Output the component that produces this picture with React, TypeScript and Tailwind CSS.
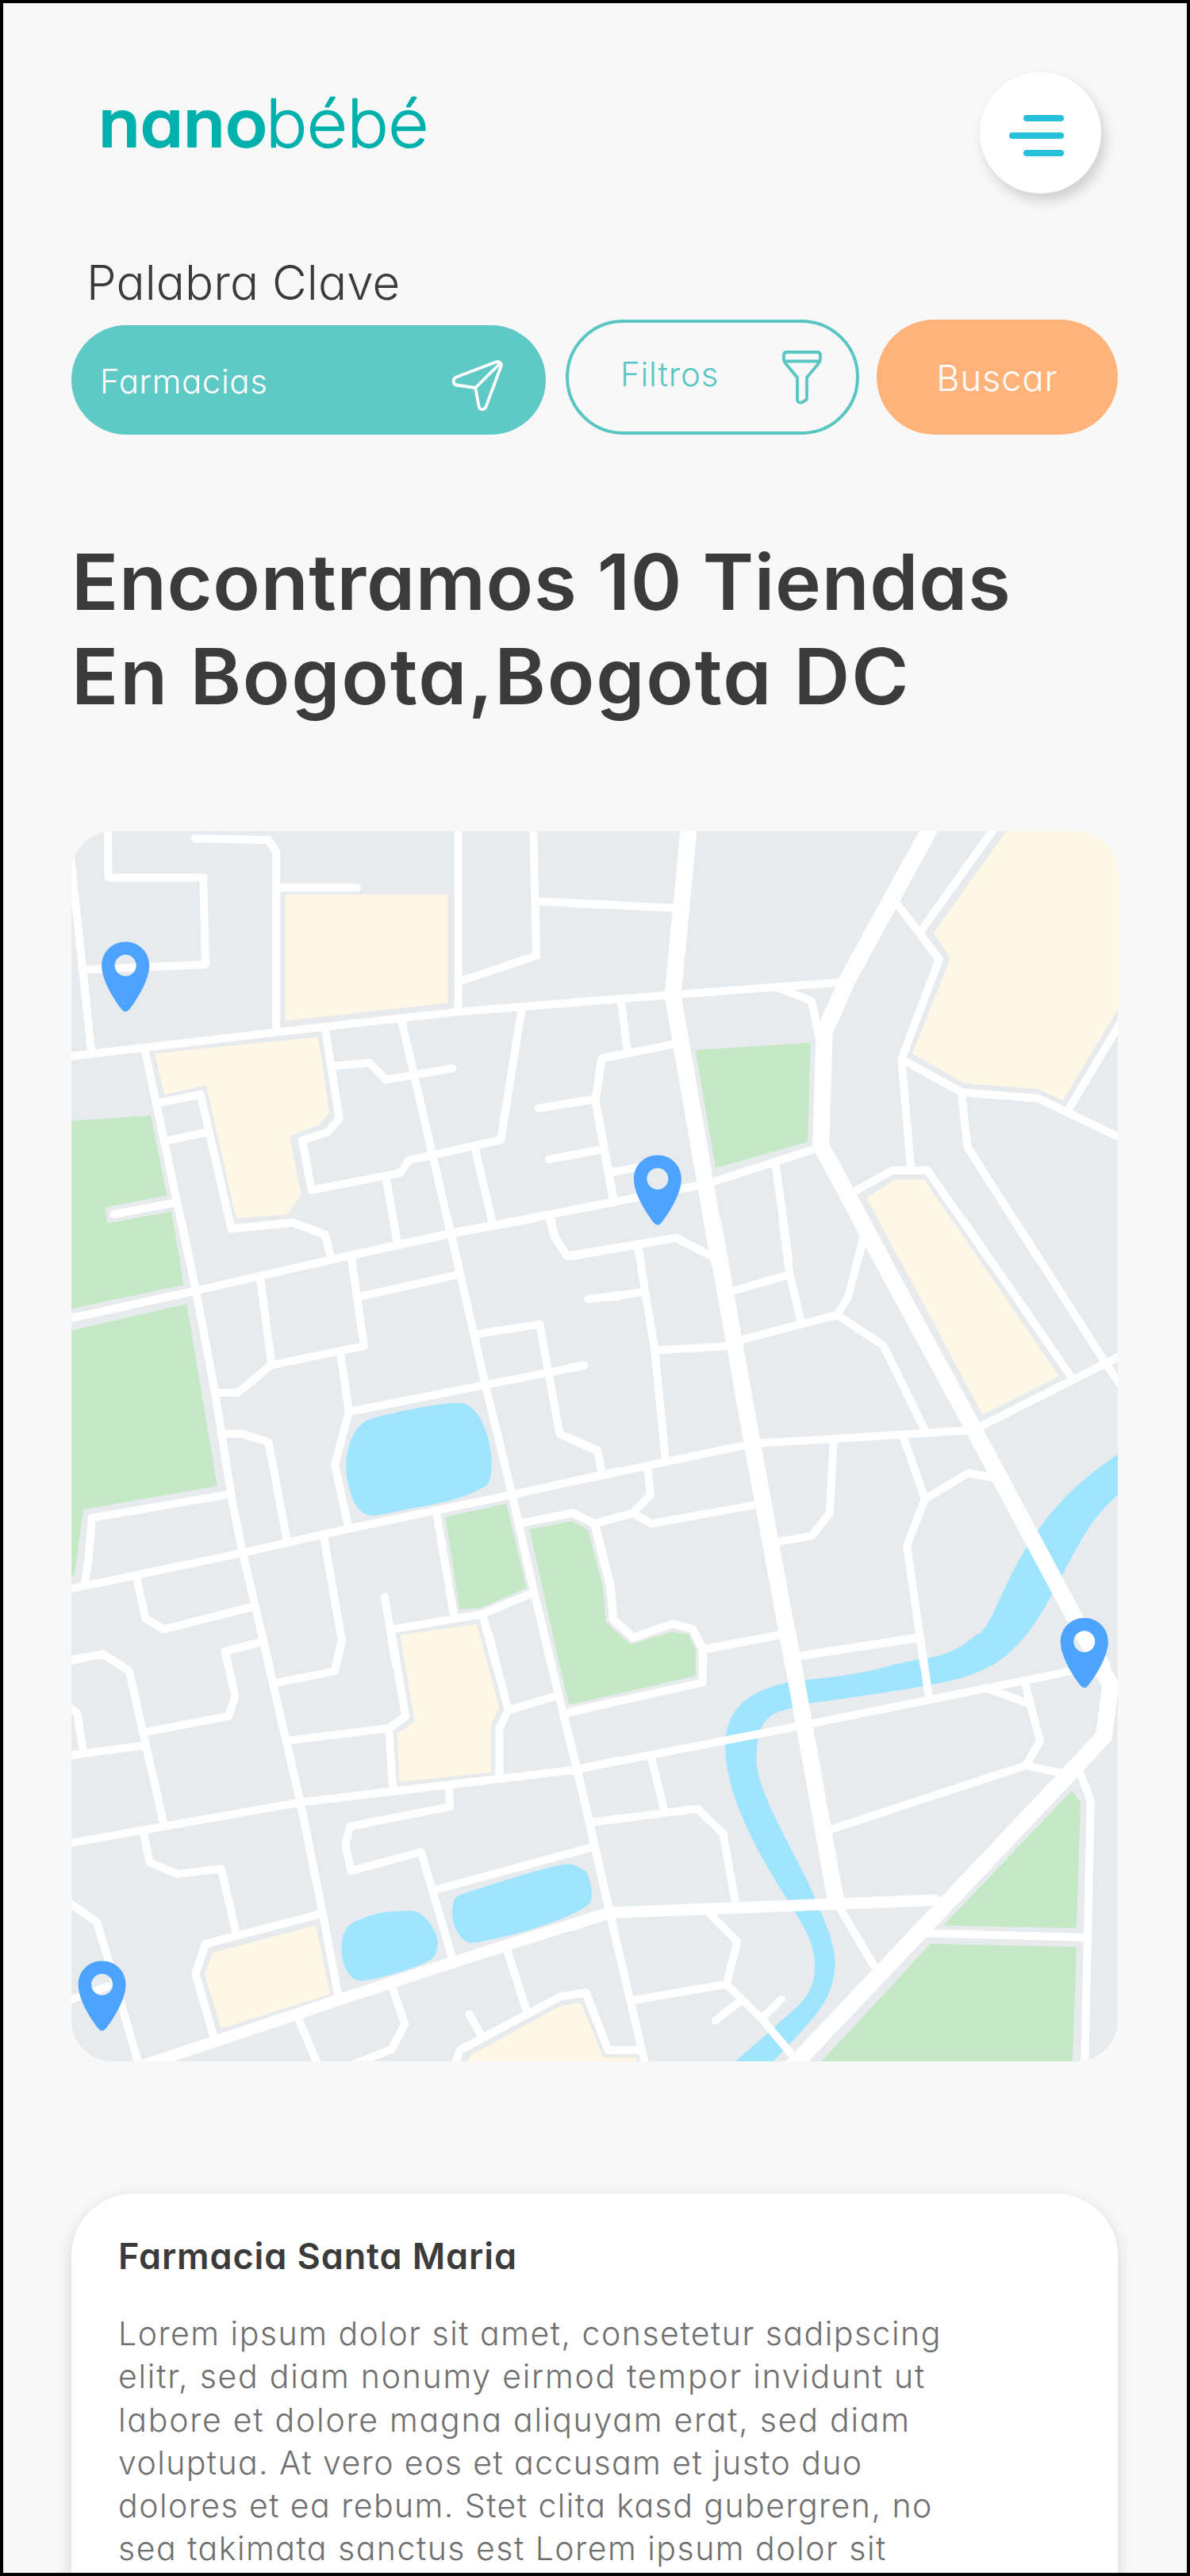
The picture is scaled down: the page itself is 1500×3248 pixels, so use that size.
type Tile = {
  x: number;
  y: number;
  park: string;
  block: string;
  water: string;
  avenues: string;
  boulevards: string;
  streets: string;
};

// Each map tile covers 700x560 map units and is plotted on its own 1568x1568 grid.
const tiles: Tile[] = [
  {
    x: 80,
    y: 1030,
    park: "M0 1075L248 1055L293 1337L118 1378L124 1435L306 1393L330 1568H0Z",
    block:
      "M627 275H1086V657L627 720Z M259 835L720 777L752 1045L722 1087L640 1128L672 1332L634 1404L489 1417L404 947L286 981Z",
    water: "",
    avenues: "",
    boulevards: "",
    streets:
      "M126 0L128 214H396L402 521L60 540 M22 150L80 830 M372 76L580 82L602 125V755 M602 250H830 M1116 0V680 M1327 0L1336 490L1120 580 M1336 298L1568 311 M0 848L603 760L1116 688L1568 643 M232 828L357 1568 M262 1012L388 980L475 1453L648 1432L740 1475L757 1560 M285 1145L412 1112 M315 1362L143 1403 M741 755L780 1065L747 1113L675 1142L702 1318L953 1256L975 1213L1236 1140L1294 685 M762 880L865 868L912 928L1100 887 M955 715L1095 1475L1113 1568 M912 1275L944 1505 M1162 1165L1213 1435 M700 1580L944 1510L1100 1468L1370 1405L1568 1357 M1375 1410L1390 1485L1424 1551L1568 1520 M1568 838L1520 853L1503 1000L1552 1345 M1342 1029L1503 996 M1372 1209L1525 1173 M1547 1255L1568 1250",
  },
  {
    x: 720,
    y: 1030,
    park: "M352 823L677 797L669 1147L409 1240Z",
    block:
      "M1258 0L1024 410L1072 500L964 835L1112 940L1320 961L1390 1001L1568 630V0Z M835 1345L915 1280H998L1155 1568H930Z",
    water: "",
    avenues: "M336 0L288 630L418 1568 M1032 0L781 575L716 760L706 1160L882 1568",
    boulevards: "",
    streets:
      "M0 656L290 628L770 583 M0 305L290 321 M142 650L160 830 M300 800L88 853L70 1000L120 1345 M0 1010L70 996 M0 1195L92 1173 M112 1255L200 1235 M0 1388L380 1297L700 1168 M580 600L680 650L703 790 M920 305L1040 503L934 855L1103 972L1320 994L1568 1143 M1219 0L990 400 M934 860L960 1240 M1103 975L1120 1165L1325 1568 M1404 1035L1568 694 M800 1323L908 1248H1007L1185 1568 M578 1225L616 1568 M826 1490L810 1568 M0 1552L297 1486L405 1555 M190 1515L197 1568",
  },
  {
    x: 80,
    y: 1540,
    park: "M0 0H118L124 7L155 0H311L340 225L0 314Z M0 392L349 291L435 934L57 1017L32 1250L0 1255Z M1080 1044L1252 996L1308 1294L1180 1364L1119 1369Z M1317 1087L1438 1058L1482 1090L1524 1290L1532 1415L1568 1457V1568H1402Z",
    block: "M953 1460L1168 1422L1199 1568H966Z",
    water:
      "M870 697C930 675 1060 640 1120 641C1175 642 1212 770 1210 860C1208 920 1200 930 1185 940C1120 985 1060 995 1000 1010C950 1020 890 1040 872 1039C820 1036 800 930 799 865C800 790 825 710 870 697Z",
    avenues: "",
    boulevards: "",
    streets:
      "M335 0L375 245L430 610L475 970L507 1170L582 1568 M0 348L375 245L757 135L1100 42L1330 -10 M470 0L475 25L648 5L740 47L757 130 M933 0L944 78 M1088 0L1122 190L1192 575L1268 965L1330 1310L1380 1568 M557 205L589 505L493 605H437 M589 507L850 440L815 135 M840 265L1118 187 M783 465L807 672L767 860L806 1080 M807 672L1192 577L1470 509 M1168 398L1346 363L1402 750L1510 808L1520 885 M450 750H506L580 779L633 1130 M475 962L81 1047Q74 1200 60 1280 M0 1303L507 1170L806 1085L1268 965L1568 882 M208 1262L233 1403L285 1440L537 1360 M0 1552L113 1528L165 1568 M560 1485L457 1518L465 1568 M737 1120L787 1480L770 1568 M908 1326L940 1568 M930 1440L1182 1387L1325 1313 M1055 1035L1104 1395 M1185 1390L1222 1568 M1295 1065L1440 1029L1500 1068L1568 1043 M1500 1068L1545 1290L1553 1405L1568 1425 M1375 0L1388 55L1424 123L1568 92 M1482 274L1568 265",
  },
  {
    x: 720,
    y: 1540,
    park: "M0 1058L48 1090L88 1280L97 1413L168 1495L287 1448L332 1463L352 1515V1568H0Z",
    block: "M872 0H1080L1378 547L1162 682Z",
    water:
      "M1568 803C1460 890 1380 980 1318 1092L1287 1150C1230 1270 1210 1340 1190 1390C1150 1495 1080 1530 1010 1543L900 1568H1190C1290 1490 1340 1360 1388 1248C1450 1100 1480 1030 1568 940Z",
    avenues: "M401 0L511 775L628 1568 M820 0L1137 732L1440 1440L1500 1568",
    boulevards: "",
    streets:
      "M0 120L297 58L400 125 M190 90L210 250L237 455L267 835 M50 274L205 250 M240 455L445 440 M598 0L618 185L650 355 M455 247L618 187 M480 418L752 330L882 437L1000 738 M752 330L783 268L825 60 M0 920L510 785L1125 738 M1150 728L1568 465 M1110 0L1412 548 M1255 0L1507 495L1568 605 M0 770L75 810L88 885 M0 515L38 508 M217 870L225 965L175 1030L68 1067L5 1029 M175 1030L227 1067L525 1000 M742 775L731 1030L681 1110L588 1130 M940 765L1000 980L1122 889L1195 905 M1000 980L949 1145L997 1568 M68 1067L112 1285L121 1405L176 1470L287 1420L345 1440L374 1510V1568 M374 1512L595 1458 M645 1535L985 1470",
  },
  {
    x: 80,
    y: 2060,
    park: "M1382 0H1568V211L1428 249Z",
    block:
      "M952 5L980 0H1175L1231 257L1208 325V489L950 523L943 352L993 311Z M424 1125L714 1030L754 1272L446 1394L400 1202Z M1462 1304L1405 1313L1148 1490L1130 1568H1568V1495H1523Z",
    water:
      "M845 1005C890 982 940 977 985 978C1020 980 1058 1050 1058 1090C1055 1145 1040 1150 1020 1163C960 1195 870 1225 840 1225C800 1222 786 1150 786 1110C788 1050 800 1025 845 1005Z M1125 920C1200 890 1370 820 1422 813C1440 813 1478 830 1483 855C1495 895 1495 940 1487 950C1470 985 1330 1045 1270 1062C1230 1072 1170 1093 1150 1091C1120 1085 1098 1030 1099 985C1100 940 1105 928 1125 920Z",
    avenues: "",
    boulevards: "M120 1568L427 1440L780 1292L1100 1160L1540 985",
    streets:
      "M0 100L113 72L187 132L283 665 M0 245L40 280L57 415 M0 432L232 394 M232 347L467 291L486 222L458 62L555 30 M560 0L670 595L735 1000L778 1285 M785 0L787 25L767 132L600 173 M0 743L670 595L1445 480L1568 447 M228 705L244 807L322 848L447 830L488 1055 M0 935L30 960L95 1018L130 1160L225 1568 M0 1302L125 1245 M724 990L402 1095L374 1200L427 1430 M928 0L967 292L920 333L931 545 M636 377L920 333 M1202 0L1257 270L1232 333V500 M1257 270L1395 218 M1358 0L1400 220L1452 480L1500 740L1545 990L1568 1120 M1425 280L1568 237 M1089 540L1093 610L810 680L797 745L813 837L1011 770L1100 1150 M1048 905L1495 753 M1492 665L1568 653 M930 1250L965 1378L928 1467L820 1520 M663 1355L715 1509L735 1568 M1253 1115L1310 1335 M1147 1343L1182 1420 M1105 1530L1120 1470L1405 1280L1475 1267L1540 1470H1568",
  },
  {
    x: 720,
    y: 2060,
    park: "M0 0H135L168 38L275 0H332L352 55V149L0 249Z M1414 554L1439 595L1428 1039L1052 1030Z M1015 1095L1428 1105L1415 1568H665Z",
    block: "M0 1305H28L92 1495H185L190 1568H0Z",
    water:
      "M1148 0C1105 50 1060 75 1005 87C870 112 870 140 662 163C540 180 455 230 438 357C420 540 530 780 612 940C660 1040 690 1090 689 1180C687 1290 630 1320 570 1395L465 1509L410 1568H530L572 1509L612 1455C680 1365 745 1290 746 1165C745 1090 725 1040 690 935C640 780 510 540 525 420C530 290 570 280 625 262L672 246C850 215 905 205 995 185C1160 150 1210 110 1288 0Z",
    avenues: "M613 0L748 940 M1450 0L1497 120L1524 180L1505 362L1410 490L595 1568",
    boulevards: "M0 1030L110 985L1030 940",
    streets:
      "M350 0L372 55V172L0 275 M372 55L613 0 M645 78L985 12 M985 0L1010 215 M0 485L20 478L660 322L1420 130 M-20 290L18 480L110 985L208 1509L218 1568 M228 440L264 625 M60 665L358 618L430 705L465 950 M0 775L60 753 M1170 190L1290 245 M1283 175L1300 260L1325 378L1285 465L1385 492 M735 690L1285 465 M1438 490L1468 590L1450 1568 M1010 1057L1450 1072 M758 965L855 1170 M390 985L470 1087L440 1237L180 1293 M440 1237L540 1360L620 1480 M408 1366L477 1298 M542 1355L595 1290 M0 1275L43 1267L105 1469H195",
  },
];

const pins = [
  { x: 158.7, y: 1187.5 },
  { x: 829.4, y: 1456.5 },
  { x: 1367.3, y: 2040 },
  { x: 129.1, y: 2472.5 },
];

function CityMap() {
  const place = (t: Tile) => `translate(${t.x} ${t.y}) scale(0.446429 0.357143)`;
  return (
    <svg viewBox="90.5 1048 1319 1551" className="block h-[1551px] w-[1319px]">
      {tiles.map((t, i) => (
        <g key={i} transform={place(t)}>
          <path d={t.block} fill="#fef7e6" />
          <path d={t.park} fill="#c5e8c5" />
          <path d={t.water} fill="#9fe5ff" />
        </g>
      ))}
      {tiles.map((t, i) => (
        <g
          key={i}
          transform={place(t)}
          fill="none"
          stroke="#fff"
          strokeLinecap="round"
          strokeLinejoin="round"
        >
          <path d={t.streets} strokeWidth="10" vectorEffect="non-scaling-stroke" />
          <path d={t.boulevards} strokeWidth="14.5" vectorEffect="non-scaling-stroke" />
          <path d={t.avenues} strokeWidth="21" vectorEffect="non-scaling-stroke" />
        </g>
      ))}
      {pins.map((p, i) => (
        <path
          key={i}
          transform={`translate(${p.x - 30} ${p.y})`}
          fill="#4da4ff"
          fillRule="evenodd"
          d="M30 0C13 0 0 13 0 30C0 51 20 79 25.500 85.500Q30 90.500 34.500 85.500C40 79 60 51 60 30C60 13 47 0 30 0ZM30 16.200A13.500 13.500 0 1 1 30 43.200A13.500 13.500 0 1 1 30 16.200Z"
        />
      ))}
    </svg>
  );
}

function Logo() {
  return (
    <svg
      viewBox="0 0 430 90"
      className="h-[90px] w-[430px] overflow-visible"
      fill="#00b0ac"
      stroke="#00b0ac"
      strokeLinejoin="round"
    >
      <text x="-1" y="67" textLength="213" lengthAdjust="spacingAndGlyphs" fontSize="82" fontWeight="500" strokeWidth="2">
        nano
      </text>
      <text x="210" y="67" textLength="205" lengthAdjust="spacingAndGlyphs" fontSize="82" fontWeight="200" strokeWidth="2.400">
        bébé
      </text>
    </svg>
  );
}

function SendIcon() {
  return (
    <svg viewBox="569 451 68 68" className="size-[68px]" fill="none" stroke="#fff" strokeWidth="3.8" strokeLinejoin="round">
      <path d="M626 455.500L576 474.500C571.500 476.500 571.500 483.500 576.500 484.500L600.300 488L604.500 511C605.500 516.500 611.500 516.500 613.500 512L632.500 461C634 457 630 453.800 626 455.500ZM600.300 488L631 457.500" />
    </svg>
  );
}

function FunnelIcon() {
  return (
    <svg viewBox="986 440 52 70" className="h-[70px] w-[52px]" fill="none" stroke="#5ac6c3" strokeWidth="3.8" strokeLinejoin="round">
      <path d="M989 452V447Q989 443 993 443H1031Q1035 443 1035 447V452Q1035 455 1033 457L1018 475V501Q1018 503 1016 504L1011.500 506.500Q1006 507 1006 503V475L991 457Q989 455 989 452ZM989 454.500H1035" />
    </svg>
  );
}

export default function App() {
  return (
    <div className="h-[3248px] w-[1500px] overflow-hidden border-4 border-black bg-[#f8f8f8] px-[86px] font-['Inter',sans-serif] text-[#3b3b3b] [font-feature-settings:'cv11']">
      <header className="flex justify-between pt-[87px] pr-[22px] pl-[35px]">
        <div className="pt-[27px]">
          <Logo />
        </div>
        <button className="flex size-[153px] flex-col items-end justify-center gap-[14px] rounded-full bg-white pt-[7px] pr-[47px] shadow-[5px_9px_16px_rgba(0,0,0,0.17)]">
          <span className="h-2 w-[51px] rounded-full bg-[#26c0da]" />
          <span className="h-2 w-[69px] rounded-full bg-[#26c0da]" />
          <span className="h-2 w-[51px] rounded-full bg-[#26c0da]" />
        </button>
      </header>

      <label className="mt-[82px] block pl-[19px] text-[60px] leading-[60px] font-light tracking-[0.1px]">
        Palabra Clave
      </label>
      <div className="mt-[17px] flex items-end">
        <div className="flex h-[138px] w-[598px] items-center justify-between rounded-full bg-[#5fc9c5] pr-[52px] pl-[36px] text-[42px] font-light tracking-[0.6px] text-white">
          <span className="pt-[3px]">Farmacias</span>
          <span className="pt-[13px]">
            <SendIcon />
          </span>
        </div>
        <button className="ml-[25px] flex h-[145px] w-[370px] items-center justify-between rounded-full border-4 border-[#5ac6c3] pr-[42px] pl-[65px] text-[42px] font-light tracking-[0.8px] text-[#5ac6c3]">
          <span className="pb-2">Filtros</span>
          <FunnelIcon />
        </button>
        <button className="ml-[22px] h-[145px] w-[304px] rounded-full bg-[#ffb37a] pt-[3px] text-[45px] font-light tracking-[1px] text-white">
          Buscar
        </button>
      </div>

      <h1 className="mt-[126px] text-[98px] leading-[119.3px] font-semibold whitespace-nowrap">
        <span className="block tracking-[0.65px]">Encontramos 10 Tiendas</span>
        <span className="block tracking-[1.8px]">En Bogota,Bogota DC</span>
      </h1>

      <div className="mt-[135.4px] h-[1551px] w-[1319px] overflow-hidden rounded-[52px] bg-[#e7ebee]">
        <CityMap />
      </div>

      <section className="mt-[167px] h-[620px] w-[1319px] rounded-[78px] bg-white pt-[52px] pl-[59px] shadow-[0_6px_20px_rgba(0,0,0,0.14)]">
        <h2 className="text-[45px] leading-[54px] font-semibold tracking-[0.9px]">Farmacia Santa Maria</h2>
        <p className="mt-[43px] text-[41px] leading-[54.3px] font-light whitespace-nowrap text-[#707070]">
          <span className="block tracking-[1.5px]">Lorem ipsum dolor sit amet, consetetur sadipscing</span>
          <span className="block tracking-[1.75px]">elitr, sed diam nonumy eirmod tempor invidunt ut</span>
          <span className="block tracking-[1.75px]">labore et dolore magna aliquyam erat, sed diam</span>
          <span className="block tracking-[1.42px]">voluptua. At vero eos et accusam et justo duo</span>
          <span className="block tracking-[1.45px]">dolores et ea rebum. Stet clita kasd gubergren, no</span>
          <span className="block tracking-[1.5px]">sea takimata sanctus est Lorem ipsum dolor sit</span>
        </p>
      </section>
    </div>
  );
}
